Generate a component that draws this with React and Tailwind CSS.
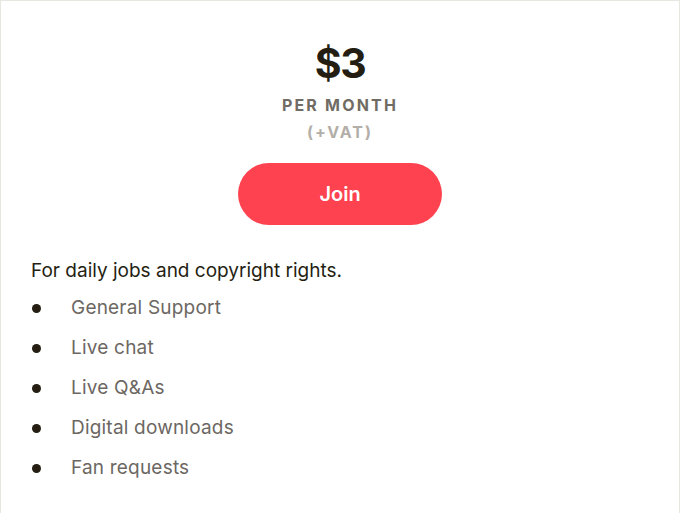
const benefits = [
  'General Support',
  'Live chat',
  'Live Q&As',
  'Digital downloads',
  'Fan requests',
];

export default function App() {
  return (
    <div className="min-h-[513px] bg-white font-['Inter',sans-serif]">
      <div className="w-[680px] min-h-[530px] border border-[#e8e6e1] bg-white px-[30px] pt-[38px]">
        {/* price block */}
        <div className="flex flex-col items-center">
          <div className="text-[41px] font-bold leading-[48px] tracking-[-1.5px] text-[#241e12]">$3</div>
          <div className="mt-[8px] text-[16px] font-bold leading-[20px] tracking-[2.2px] text-[#706c64]">PER MONTH</div>
          <div className="mt-[7px] text-[16px] font-bold leading-[20px] tracking-[2px] text-[#b3aea7]">(+VAT)</div>
          <button className="mt-[21px] h-[62px] w-[204px] rounded-full bg-[#ff424f] text-[20px] font-semibold text-white">
            Join
          </button>
        </div>

        {/* description */}
        <p className="mt-[34px] text-[19px] leading-[24px] text-[#241e12]">For daily jobs and copyright rights.</p>
        <ul className="mt-[5px] flex flex-col">
          {benefits.map((b) => (
            <li key={b} className="flex h-[40px] items-center">
              <span className="ml-[1px] h-[9px] w-[9px] rounded-full bg-[#241e12]" />
              <span className="ml-[30px] text-[19px] tracking-[0.2px] text-[#6c6762]">{b}</span>
            </li>
          ))}
        </ul>
      </div>
    </div>
  );
}
